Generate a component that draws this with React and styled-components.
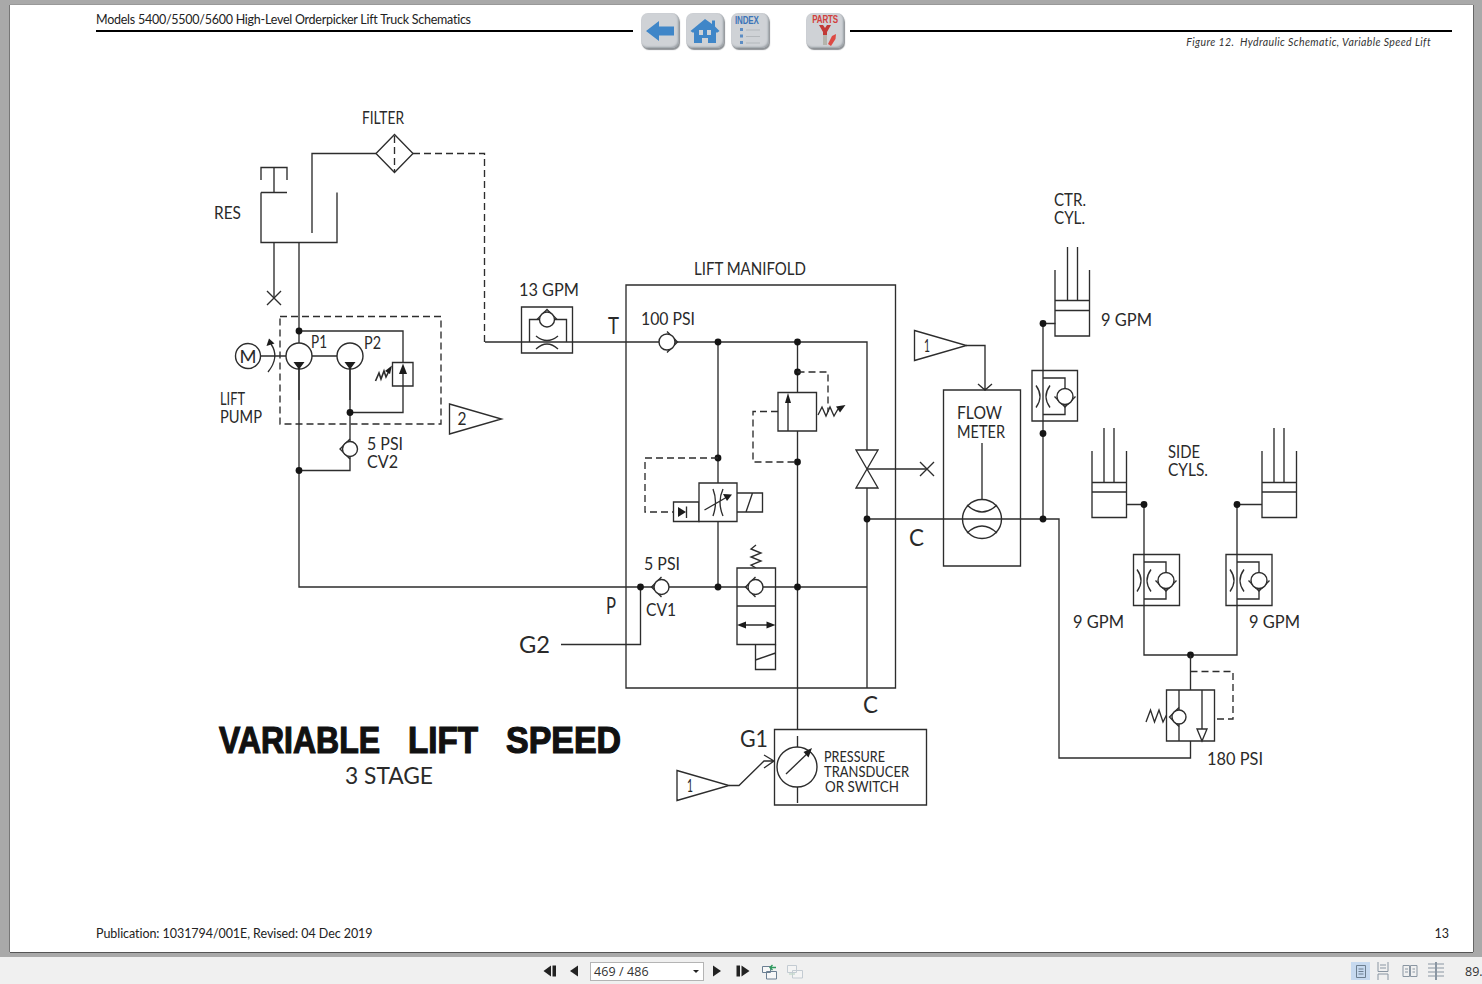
import React from "react";
import styled, { createGlobalStyle } from "styled-components";

const Global = createGlobalStyle`
  html, body { margin: 0; padding: 0; height: 100%; overflow: hidden; background: #a9a9a9; }
  #root { height: 100%; }
`;

const Viewer = styled.div`
  height: 984px; width: 1482px; display: flex; flex-direction: column; background: #a9a9a9; overflow: hidden;
`;
const DocArea = styled.main`
  flex: 1; min-height: 0; padding: 5px 9px 5px 10px; display: flex;
`;
const Page = styled.section`
  flex: 1; background: #fff; display: flex; flex-direction: column;
  box-shadow: -1px 0 0 #777, 1px 0 0 #666, 0 1px 0 #555, 0 -1px 0 #999;
`;
const PageHeader = styled.header`
  height: 45px; display: flex; padding-left: 86px; flex: none;
`;
const HeaderTitle = styled.div`
  width: 537px; height: 27px; box-sizing: border-box; border-bottom: 2px solid #000;
  font: 12.5px/30px Lato, sans-serif; color: #222; white-space: nowrap; letter-spacing: -0.25px;
`;
const NavGroup = styled.nav`
  display: flex; gap: 7px; padding: 8px 6px 0 8px; align-items: flex-start;
`;
const NavButton = styled.div`
  width: 38px; height: 35px; border-radius: 7px; background: #cfd2d6; display: flex; flex-direction: column;
  align-items: center; justify-content: center; margin-left: ${p => p.$gap || 0}px; flex: none;
  box-shadow: inset -1px -1px 2px #9aa0a6, 1px 2px 1px #8e9296; position: relative; overflow: hidden;
`;
const NavWord = styled.span`
  font: 700 10px/9px "Liberation Sans", sans-serif; color: ${p => p.$color}; letter-spacing: -0.2px;
  transform: scaleX(0.8); margin-right: ${p => p.$shift || 0}px;
`;
const HeaderRight = styled.div`
  flex: 1; margin-right: 21px;
`;
const HeaderRule = styled.div`
  height: 27px; box-sizing: border-box; border-bottom: 2px solid #000;
`;
const Caption = styled.div`
  padding: 3px 21px 0 0; text-align: right; font: italic 10.5px/14px Lato, sans-serif; color: #333; letter-spacing: 0.4px;
`;
const DiagramSvg = styled.svg`
  display: block; flex: none; width: 1463px; height: 870px;
`;
const PageFooter = styled.footer`
  flex: 1; display: flex; justify-content: space-between; align-items: flex-start;
  padding: 6px 24px 0 86px; font: 12.5px/15px Lato, sans-serif; color: #222; letter-spacing: -0.06px;
`;
const StatusBar = styled.footer`
  height: 27px; flex: none; box-sizing: border-box; padding: 1px 0 0 543px; background: #f0f0f0; display: flex; align-items: center;
  font: 12.5px "Open Sans", sans-serif; color: #333; overflow: hidden;
`;
const PagerGroup = styled.div`
  display: flex; align-items: center;
`;
const PagerGap = styled.span`
  width: ${p => p.$w}px; flex: none;
`;
const PageSelect = styled.div`
  width: 114px; height: 19px; box-sizing: border-box; border: 1px solid #b4b4b4; background: #fff;
  margin: 0 8px 0 11px; padding-left: 3px; line-height: 17px; position: relative; letter-spacing: 0.1px;
  &::after { content: ""; position: absolute; right: 4px; top: 7px; border: 3px solid transparent; border-top: 3px solid #222; border-bottom: 0; }
`;
const ViewGroup = styled.div`
  margin-left: auto; display: flex; align-items: center; width: 131px; flex: none; height: 100%;
`;
const ViewButton = styled.div`
  width: ${p => p.$w}px; height: 18px; display: flex; align-items: center; justify-content: center; flex: none;
  background: ${p => (p.$on ? "#c6d9ef" : "transparent")};
`;
const Zoom = styled.span`
  margin-left: 18px; white-space: nowrap; font-size: 12.5px;
`;

/* schematic parts */
const Wire = styled.path`
  fill: none; stroke: #2d2d2d; stroke-width: ${p => p.$w || 1.35};
  stroke-dasharray: ${p => (p.$dash ? "7 4" : "none")};
`;
const Solid = styled.path`
  fill: #1c1c1c; stroke: none;
`;
const Shape = styled.path`
  fill: ${p => (p.$open ? "none" : "#fff")}; stroke: #2d2d2d; stroke-width: 1.35;
`;
const Round = styled.circle`
  fill: ${p => (p.$dot ? "#151515" : p.$open ? "none" : "#fff")}; stroke: ${p => (p.$dot ? "none" : "#2d2d2d")}; stroke-width: 1.4;
`;
const LabelText = styled.text`
  font-family: Lato, "Liberation Sans", sans-serif; fill: #2a2a2a; font-size: ${p => p.$size || 16.5}px;
`;
const HeavyText = styled.text`
  font-family: "Liberation Sans", sans-serif; font-weight: 700; fill: #111; stroke: #111; stroke-width: 1.2px; font-size: 37px;
`;

const Label = ({ x, cy, w, size = 16.5, children }) => (
  <LabelText x={x} y={cy + size * 0.36} $size={size} textLength={w} lengthAdjust="spacingAndGlyphs">{children}</LabelText>
);
const Dot = ({ x, y }) => <Round cx={x} cy={y} r={3.4} $dot />;
const Cross = ({ x, y, s = 7 }) => <Wire d={`M${x - s} ${y - s}L${x + s} ${y + s}M${x - s} ${y + s}L${x + s} ${y - s}`} />;

const Check = ({ x, y, r = 8, dir = "left" }) => {
  const e = r + 2.5;
  const d = {
    left: `M${x} ${y - e}L${x - e} ${y}L${x} ${y + e}`,
    right: `M${x} ${y - e}L${x + e} ${y}L${x} ${y + e}`,
    down: `M${x - e} ${y}L${x} ${y + e}L${x + e} ${y}`,
    up: `M${x - e} ${y}L${x} ${y - e}L${x + e} ${y}`,
  }[dir];
  return (<g><Wire d={d} /><Round cx={x} cy={y} r={r} /></g>);
};

const Callout = ({ x, y, n, nx }) => (
  <g>
    <Shape d={`M${x} ${y - 15}L${x + 52} ${y}L${x} ${y + 15}Z`} />
    <Label x={nx} cy={y} w={n === "1" ? 6 : 9} size={17}>{n}</Label>
  </g>
);

const Cylinder = ({ x, top, wall, p1, p2, bottom, r1, r2 }) => (
  <Wire d={`M${x} ${wall}V${bottom}H${x + 34.5}V${wall}M${x} ${p1}H${x + 34.5}M${x} ${p2}H${x + 34.5}M${r1} ${top}V${p1}M${r2} ${top}V${p1}`} />
);

const FlowControl = ({ x, y, w, h, line }) => {
  const cx = line + 22;
  return (
    <g>
      <Wire d={`M${x} ${y}H${x + w}V${y + h}H${x}Z`} />
      <Wire d={`M${line} ${y + 7.5}H${cx}V${y + h - 6.5}H${line}`} />
      <Wire d={`M${line - 7} ${y + 15}Q${line + 1} ${y + 26} ${line - 7} ${y + 37}M${line + 7} ${y + 15}Q${line - 1} ${y + 26} ${line + 7} ${y + 37}`} />
      <Check x={cx} y={y + 26} r={8} dir="down" />
    </g>
  );
};

const Schematic = () => (
  <DiagramSvg viewBox="10 50 1463 870">
    {/* reservoir */}
    <Wire d="M261 180V167.5H287V180M274 167.5V192.5M261 192.5H287M261 192.5V242.5H337V192.5M312 233V153.5H376" />
    <Wire d="M376 153.5L394.5 134.5L413 153.5L394.5 172.5Z" />
    <Wire d="M394.5 136V172" $dash />
    <Wire d="M413 153.5H484.5V342" $dash />
    <Wire d="M274 242.5V298M299 242.5V587H640.5" />
    <Cross x={274} y={298} />
    {/* pump group */}
    <Wire d="M280 316.5H441V424H280Z" $dash />
    <Wire d="M299 331H403V412.5H350M350 369V441M350 457V470.5H299M299 356H350M261 356H286" />
    <Round cx={248} cy={356} r={12.5} />
    <Label x={239.5} cy={356.5} w={17} size={17.5}>M</Label>
    <Wire d="M268 372Q280 357 271 344" />
    <Solid d="M266.5 346L269 338.5L274.5 343.5Z" />
    <Round cx={299} cy={356} r={13} />
    <Round cx={350} cy={356} r={13} />
    <Wire d="M299 362V400M350 362V400" />
    <Solid d="M293.5 362H304.5L299 369.5ZM344.5 362H355.5L350 369.5Z" />
    <Shape d="M392.5 362.5H413V386H392.5Z" />
    <Wire d="M403 373V386" />
    <Solid d="M399 374L403 363.5L407 374Z" />
    <Wire d="M375.5 381L379 373L381 379L384 371L386 377L390 369" $w={1.6} />
    <Solid d="M385 371L392 365.5L390 374Z" />
    <Dot x={299} y={331} />
    <Dot x={350} y={412.5} />
    <Dot x={299} y={470.5} />
    <Check x={350} y={449} r={7.5} />
    <Callout x={449.5} y={419} n="2" nx={457.5} />

    {/* 13 GPM + T line */}
    <Wire d="M485 342H867V450" />
    <Shape d="M521.5 307H572.5V353H521.5Z" />
    <Wire d="M521.5 342H572.5M529.5 342V319.5H566.5V342" />
    <Shape d="M536 336Q547 345 558 336M536 349Q547 339 558 349" $open />
    <Check x={547} y={319.5} r={7.5} dir="up" />

    {/* manifold */}
    <Wire d="M626 285H895.5V688H626Z" />
    <Check x={667} y={342} r={8} dir="right" />
    <Wire d="M718 342V483M718 521.5V587M797.5 342V392.5M797.5 431V729.5M640.5 587V644.5H561" />
    <Wire d="M640.5 587H737M867 488V688M867 519H1059V758H1190.5V741M867 469H927" />
    <Dot x={718} y={342} />
    <Dot x={797.5} y={342} />
    <Dot x={797.5} y={372} />
    <Dot x={797.5} y={462} />
    <Dot x={718} y={458} />
    <Dot x={867} y={519} />
    <Dot x={640.5} y={587} />
    <Dot x={718} y={587} />
    <Check x={661.5} y={587} r={7.5} />
    <Cross x={927} y={469} />
    <Shape d="M856 450H878L856 488H878Z" />

    {/* relief valve */}
    <Wire d="M797.5 372H828V412" $dash />
    <Wire d="M778 411.5H753V462H797.5" $dash />
    <Shape d="M778 392.5H816.5V431H778Z" />
    <Wire d="M788 403V431" />
    <Solid d="M785 403L788 393L791 403Z" />
    <Wire d="M818 415L822 407L826 416L830 407L834 416L838 409" />
    <Solid d="M836 406.5L845.5 405L840 412.5Z" />

    {/* proportional valve */}
    <Wire d="M718 458H645V512H673.5" $dash />
    <Shape d="M673.5 502H699V521.5H673.5Z" />
    <Solid d="M678 507L686 512L678 517Z" />
    <Wire d="M686.5 506.5V518" />
    <Shape d="M699 483H737V521.5H699Z" />
    <Wire d="M713 489Q718 502 713 516M723 489Q717 502 723 516M704.5 510L727 497" />
    <Solid d="M723 494L732 494.5L727 501Z" />
    <Wire d="M737 493H762.5V512H737M746 512L752.5 493" />

    {/* directional valve */}
    <Wire d="M756 568L751 565L761 561L751 557L761 553L751 549L756 545" />
    <Shape d="M737 568H775.5V644.5H737Z" />
    <Wire d="M737 587H747M763 587H775.5M737 606H775.5M740 625H772" />
    <Solid d="M737 625L746 621.5V628.5ZM775.5 625L766.5 621.5V628.5Z" />
    <Check x={755.5} y={587} r={7.5} />
    <Wire d="M755.5 644.5V669.5H775.5V644.5M755.5 660L775.5 653" />
    <Wire d="M775.5 587H867" />
    <Dot x={797.5} y={587} />

    {/* gauge */}
    <Wire d="M774.5 729.5H926.5V805H774.5Z" />
    <Wire d="M797.5 736V747M797.5 787V803" />
    <Round cx={797} cy={767} r={20} />
    <Wire d="M786 774L810 751" />
    <Solid d="M812 748L803.5 752L808.5 757.5Z" />
    <Callout x={677} y={785.5} n="1" nx={687} />
    <Wire d="M729 785.5H739L764 761H774M764 755L774 761L764 768" />

    {/* flow meter */}
    <Callout x={914.5} y={345.5} n="1" nx={924} />
    <Wire d="M966 345.5H985V390M978 384L985 390L992 384" />
    <Wire d="M943.5 390H1020.5V566H943.5Z" />
    <Wire d="M982 443V500" />
    <Round cx={982} cy={519} r={19.5} $open />
    <Wire d="M967 505Q982 519 997 505M967 533Q982 519 997 533" />

    {/* centre cylinder */}
    <Wire d="M1043 323.5V519M1043 323.5H1055.5" />
    <Cylinder x={1055} top={247} wall={270} p1={300.5} p2={310.5} bottom={336} r1={1067.5} r2={1077.5} />
    <FlowControl x={1032} y={370.5} w={45.5} h={50.5} line={1043} />
    <Dot x={1043} y={323.5} />
    <Dot x={1043} y={433.5} />
    <Dot x={1043} y={519} />

    {/* side cylinders */}
    <Cylinder x={1092} top={428} wall={451} p1={482.5} p2={492} bottom={517.5} r1={1104} r2={1114} />
    <Cylinder x={1262} top={428} wall={451} p1={482.5} p2={492} bottom={517.5} r1={1274} r2={1284} />
    <Wire d="M1126.5 504.5H1144V655H1237V504.5H1262" />
    <FlowControl x={1133.5} y={554.5} w={46} h={51} line={1144} />
    <FlowControl x={1226} y={554.5} w={46} h={51} line={1237} />
    <Dot x={1144} y={504.5} />
    <Dot x={1237} y={504.5} />
    <Dot x={1190.5} y={655} />

    {/* 180 psi */}
    <Wire d="M1190.5 655V690" />
    <Wire d="M1190.5 671.5H1233V719H1215" $dash />
    <Wire d="M1166.5 690H1214.5V741H1166.5Z" />
    <Wire d="M1179 690V741M1202 690V741" />
    <Shape d="M1197 729H1207L1202 741Z" />
    <Check x={1179} y={717} r={7} />
    <Wire d="M1146 722L1150.5 710L1154.5 722L1159 710L1163 722L1166.5 715" />

    {/* labels */}
    <Label x={362} cy={118} w={42}>FILTER</Label>
    <Label x={214} cy={213} w={27}>RES</Label>
    <Label x={220} cy={399} w={25}>LIFT</Label>
    <Label x={220} cy={417} w={42}>PUMP</Label>
    <Label x={311} cy={342} w={16}>P1</Label>
    <Label x={364} cy={343} w={17}>P2</Label>
    <Label x={367} cy={444} w={36}>5 PSI</Label>
    <Label x={367} cy={462} w={31}>CV2</Label>
    <Label x={519} cy={290} w={60}>13 GPM</Label>
    <Label x={694} cy={269} w={112}>LIFT MANIFOLD</Label>
    <Label x={608} cy={326} w={11} size={23}>T</Label>
    <Label x={641} cy={319} w={54}>100 PSI</Label>
    <Label x={644} cy={564} w={36}>5 PSI</Label>
    <Label x={646} cy={610} w={30}>CV1</Label>
    <Label x={606} cy={606} w={10} size={23}>P</Label>
    <Label x={519} cy={645} w={31} size={23}>G2</Label>
    <Label x={863} cy={705} w={15} size={23}>C</Label>
    <Label x={909} cy={538} w={15} size={23}>C</Label>
    <Label x={740} cy={739} w={28} size={23}>G1</Label>
    <Label x={824} cy={757} w={61} size={14.5}>PRESSURE</Label>
    <Label x={824} cy={772} w={85} size={14.5}>TRANSDUCER</Label>
    <Label x={825} cy={787} w={74} size={14.5}>OR SWITCH</Label>
    <Label x={957} cy={413} w={45} size={17}>FLOW</Label>
    <Label x={957} cy={432} w={48} size={17}>METER</Label>
    <Label x={1054} cy={200} w={32}>CTR.</Label>
    <Label x={1054} cy={218} w={31}>CYL.</Label>
    <Label x={1101} cy={320} w={51}>9 GPM</Label>
    <Label x={1168} cy={452} w={32}>SIDE</Label>
    <Label x={1168} cy={470} w={40}>CYLS.</Label>
    <Label x={1073} cy={622} w={51}>9 GPM</Label>
    <Label x={1249} cy={622} w={51}>9 GPM</Label>
    <Label x={1207} cy={759} w={56}>180 PSI</Label>
    <HeavyText x={219} y={753} textLength={161} lengthAdjust="spacingAndGlyphs">VARIABLE</HeavyText>
    <HeavyText x={408} y={753} textLength={70} lengthAdjust="spacingAndGlyphs">LIFT</HeavyText>
    <HeavyText x={506} y={753} textLength={115} lengthAdjust="spacingAndGlyphs">SPEED</HeavyText>
    <Label x={345} cy={776} w={88} size={23}>3 STAGE</Label>
  </DiagramSvg>
);

const BLUE = "#3f86c8";
const ParIcon = ({ w, h, children }) => <svg width={w} height={h} viewBox={`0 0 ${w} ${h}`}>{children}</svg>;

const App = () => (
  <Viewer>
    <Global />
    <DocArea>
      <Page>
        <PageHeader>
          <HeaderTitle>Models 5400/5500/5600 High-Level Orderpicker Lift Truck Schematics</HeaderTitle>
          <NavGroup>
            <NavButton>
              <ParIcon w={32} h={24}><path d="M2 12L15 2V7.5H30V16.5H15V22Z" fill={BLUE} /></ParIcon>
            </NavButton>
            <NavButton>
              <ParIcon w={30} h={26}>
                <path fillRule="evenodd" fill={BLUE} d="M15 1L22 6V2.5H25V8.5L29.5 13L27.5 14.5H26V25H4V14.5H2.5L0.5 13ZM9 12V17H13V12ZM17 12V17H21V12ZM12 20V25H18V20Z" />
              </ParIcon>
            </NavButton>
            <NavButton>
              <NavWord $color="#3b74b8" $shift={6}>INDEX</NavWord>
              <ParIcon w={30} h={21}>
                <g fill="#5b8cc4"><rect x="5" y="3" width="3" height="3" /><rect x="5" y="9.5" width="3" height="3" /><rect x="5" y="16" width="3" height="3" /></g>
                <path d="M11 5H25M11 11.5H25M11 18H25" stroke="#b4b8bc" strokeWidth="1.2" />
              </ParIcon>
            </NavButton>
            <NavButton $gap={30}>
              <NavWord $color="#d2403c">PARTS</NavWord>
              <ParIcon w={30} h={23}>
                <path d="M9 1H13L15 4L17 1H21L17 8V11H13V8Z" fill="#c23a36" />
                <path d="M13 11H17V21H13Z" fill="#b4b4ac" />
                <path d="M18 20L22 12L26 10L25.5 15L21 22Z" fill="#dd4a44" />
              </ParIcon>
            </NavButton>
          </NavGroup>
          <HeaderRight>
            <HeaderRule />
            <Caption>Figure 12.&nbsp; Hydraulic Schematic, Variable Speed Lift</Caption>
          </HeaderRight>
        </PageHeader>
        <Schematic />
        <PageFooter>
          <span>Publication: 1031794/001E, Revised: 04 Dec 2019</span>
          <span>13</span>
        </PageFooter>
      </Page>
    </DocArea>
    <StatusBar>
      <PagerGroup>
        <ParIcon w={14} h={14}><path d="M8 1.5V12.5L0.5 7ZM9.5 1.5H13V12.5H9.5Z" fill="#222" /></ParIcon>
        <PagerGap $w={12} />
        <ParIcon w={10} h={14}><path d="M9 1.5V12.5L1 7Z" fill="#222" /></ParIcon>
        <PageSelect>469 / 486</PageSelect>
        <ParIcon w={10} h={14}><path d="M1 1.5V12.5L9 7Z" fill="#222" /></ParIcon>
        <PagerGap $w={14} />
        <ParIcon w={14} h={14}><path d="M0.5 1.5H4V12.5H0.5ZM5.5 1.5V12.5L13.5 7Z" fill="#222" /></ParIcon>
        <PagerGap $w={11} />
        <ParIcon w={17} h={17}>
          <path d="M1.5 3.5H9.5V9.5H1.5ZM5.5 8.5H15.5V16H5.5Z" fill="#f7f7f7" stroke="#6b7f92" />
          <path d="M9 4.5H15M11.5 2L9 4.5L11.5 7" fill="none" stroke="#2f9a5f" strokeWidth="1.4" />
        </ParIcon>
        <PagerGap $w={8} />
        <ParIcon w={18} h={17}>
          <path d="M1.5 2.5H10.5V9.5H1.5ZM6.5 7.5H16.5V15H6.5Z" fill="#f4f4f4" stroke="#c3cbd2" />
          <path d="M3 11H9" stroke="#c3d8cc" strokeWidth="1.4" />
        </ParIcon>
      </PagerGroup>
      <ViewGroup>
        <ViewButton $w={19} $on>
          <ParIcon w={12} h={15}><path d="M1.5 1.5H10.5V13.5H1.5ZM3.5 5H8.5M3.5 7.5H8.5M3.5 10H8.5" fill="none" stroke="#6d7f90" /></ParIcon>
        </ViewButton>
        <ViewButton $w={25}>
          <ParIcon w={12} h={18}><path d="M1 0V9.5H11V0M1 18V12H11V18M3 3H9M3 6H9" fill="none" stroke="#8a96a2" /></ParIcon>
        </ViewButton>
        <ViewButton $w={29}>
          <ParIcon w={16} h={14}><path d="M1 1.5H7.5V12.5H1ZM8.5 1.5H15V12.5H8.5ZM3 5H6M3 8H6M10.5 5H13M10.5 8H13" fill="none" stroke="#8a96a2" /></ParIcon>
        </ViewButton>
        <ViewButton $w={23}>
          <ParIcon w={18} h={18}><path d="M1 2H8M10 2H17M1 6H8M10 6H17M1 10H8M10 10H17M1 14H8M10 14H17M8.5 0V18M9.5 0V18" fill="none" stroke="#8a96a2" /></ParIcon>
        </ViewButton>
        <Zoom>89.</Zoom>
      </ViewGroup>
    </StatusBar>
  </Viewer>
);

export default App;
